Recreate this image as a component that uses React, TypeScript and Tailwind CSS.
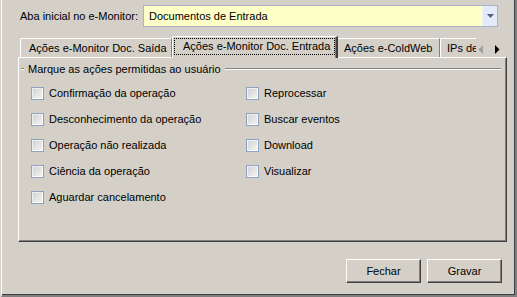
import React from "react";

const Check = ({ label }: { label: string }) => (
  <div className="flex items-center h-[13px]">
    <div className="w-[13px] h-[13px] shrink-0 border border-[#8fa3c0] bg-gradient-to-br from-[#d0d0d0] to-[#f6f6f6] shadow-[inset_1px_1px_0_#f0f0f0,inset_-1px_-1px_0_#ffffff]" />
    <span className="ml-[5px] leading-[13px] whitespace-nowrap">{label}</span>
  </div>
);

const Btn = ({ label }: { label: string }) => (
  <div className="w-[75px] h-[24px] flex items-center justify-center border-t border-l border-t-white border-l-white border-r border-b border-r-[#404040] border-b-[#404040] shadow-[inset_-1px_-1px_0_#808080] text-black">
    {label}
  </div>
);

export default function App() {
  return (
    <div
      className="w-[517px] h-[297px] bg-[#d4d0c8] overflow-hidden text-[11px] text-black"
      style={{ fontFamily: '"Liberation Sans", Arial, sans-serif' }}
    >
      <div className="ml-[1px] mt-[-1px] w-[516px] h-[298px] border-l border-l-white border-r-2 border-b-2 border-r-[#808080] border-b-[#808080] shadow-[inset_-1px_-1px_0_#404040] flex flex-col">
        {/* top row */}
        <div className="flex items-center mt-[6px] pl-[18px] h-[22px]">
          <div className="w-[123px] whitespace-nowrap">Aba inicial no e-Monitor:</div>
          <div className="w-[355px] h-[22px] border border-[#a6b3c9] bg-[#ffffc8] flex items-center">
            <span className="ml-[5px] flex-1">Documentos de Entrada</span>
            <div className="w-[15px] h-[20px] bg-[#e3ebfa] border-l border-l-[#eef3fc] flex items-center justify-center">
              <svg width="7" height="4" viewBox="0 0 7 4">
                <path d="M0 0H7L3.5 4Z" fill="#4d6185" />
              </svg>
            </div>
          </div>
        </div>

        {/* tabs */}
        <div className="ml-[16px] mt-[9px] w-[489px] flex flex-col">
          <div className="h-[21px] flex items-end pl-[2px] relative z-10">
            <div className="h-[19px] w-[152px] border-t border-l border-t-white border-l-white border-r border-r-[#808080] rounded-tl-[2px] flex items-center pl-[8px] whitespace-nowrap">
              Ações e-Monitor Doc. Saída
            </div>
            <div className="h-[22px] w-[166px] -mb-px bg-[#d4d0c8] border-t border-l border-t-white border-l-white border-r-2 border-r-[#404040] shadow-[inset_-1px_0_0_#808080] rounded-tl-[2px] flex items-start pt-[1px] pl-[1px]">
              <div className="w-[161px] h-[17px] border border-dotted border-black flex items-center pl-[8px] whitespace-nowrap">
                Ações e-Monitor Doc. Entrada
              </div>
            </div>
            <div className="h-[19px] w-[102px] border-t border-t-white border-r border-r-[#808080] flex items-center pl-[6px] whitespace-nowrap">
              Ações e-ColdWeb
            </div>
            <div className="h-[19px] w-[36px] border-t border-l border-t-white border-l-white overflow-hidden flex items-center pl-[6px] whitespace-nowrap">
              IPs de
            </div>
            <div className="h-[21px] flex-1 flex items-center pt-[6px] pl-[2px] gap-[12px]">
              <svg width="5" height="9" viewBox="0 0 5 9">
                <path d="M5 0V9L0.5 4.5Z" fill="#a0a0a0" />
              </svg>
              <svg width="5" height="9" viewBox="0 0 5 9">
                <path d="M0 0V9L4.5 4.5Z" fill="#000000" />
              </svg>
            </div>
          </div>

          {/* panel */}
          <div className="h-[185px] border-t border-l border-t-white border-l-white border-r border-b border-r-[#404040] border-b-[#404040] shadow-[inset_-1px_-1px_0_#808080] flex flex-col">
            <div className="flex items-center mt-[5px] ml-[2px] h-[12px]">
              <div className="w-[3px] h-[2px] border-t border-t-[#808080] border-b border-b-white" />
              <span className="ml-[4px] whitespace-nowrap">Marque as ações permitidas ao usuário</span>
              <div className="ml-[4px] w-[276px] h-[2px] border-t border-t-[#808080] border-b border-b-white" />
            </div>
            <div className="mt-[12px] ml-[12px] grid grid-cols-[215px_1fr] gap-y-[13px]">
              <Check label="Confirmação da operação" />
              <Check label="Reprocessar" />
              <Check label="Desconhecimento da operação" />
              <Check label="Buscar eventos" />
              <Check label="Operação não realizada" />
              <Check label="Download" />
              <Check label="Ciência da operação" />
              <Check label="Visualizar" />
              <Check label="Aguardar cancelamento" />
            </div>
          </div>
        </div>

        {/* buttons */}
        <div className="mt-[17px] flex justify-end gap-[6px] pr-[13px]">
          <Btn label="Fechar" />
          <Btn label="Gravar" />
        </div>
      </div>
    </div>
  );
}
